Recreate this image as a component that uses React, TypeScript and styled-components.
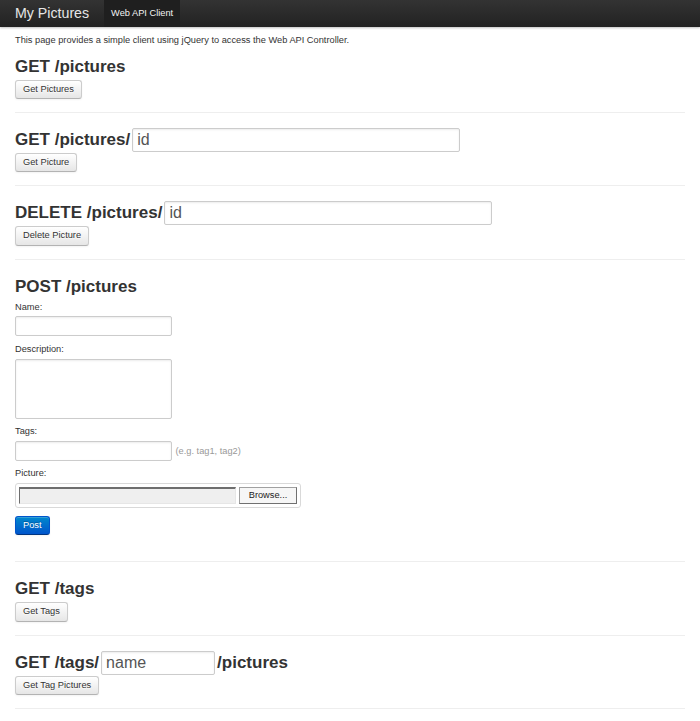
import React from "react";
import styled, { createGlobalStyle } from "styled-components";

const GlobalStyle = createGlobalStyle`
  html, body { margin: 0; padding: 0; background: #fff; }
  body {
    font-family: "Liberation Sans", Arial, Helvetica, sans-serif;
    font-size: 9.25px;
    line-height: 12.8px;
    color: #333;
  }
  * { box-sizing: border-box; }
`;

const Navbar = styled.div`
  height: 27px;
  background: linear-gradient(to bottom, #333333, #222222);
  box-shadow: 0 1px 2px rgba(0, 0, 0, 0.25);
  display: flex;
  align-items: stretch;
  padding-left: 15px;
`;

const Brand = styled.a`
  font-size: 14.2px;
  line-height: 26px;
  color: #e6e6e6;
  text-decoration: none;
  margin-right: 15px;
`;

const NavItem = styled.a<{ $active?: boolean }>`
  font-size: 9.25px;
  line-height: 27px;
  padding: 0 7px;
  color: #f2f2f2;
  text-decoration: none;
  background: ${(p) => (p.$active ? "#1f1f1f" : "transparent")};
`;

const Main = styled.div`
  padding: 0 15px;
`;

const Intro = styled.p`
  margin: 7.4px 0 0;
`;

const Section = styled.section<{ $first?: boolean }>`
  display: flex;
  flex-direction: column;
  align-items: flex-start;
  padding-top: ${(p) => (p.$first ? "7.5px" : "15px")};
  padding-bottom: 13px;
  border-bottom: 1px solid #eeeeee;
`;

const HeadRow = styled.div`
  display: flex;
  align-items: center;
  gap: 2px;
  height: 24px;
  margin-bottom: 1px;
`;

const Title = styled.h2`
  margin: 0;
  font-size: 17px;
  line-height: 24px;
  font-weight: bold;
  color: #333;
  white-space: nowrap;
`;

const ParamInput = styled.input<{ $w: number }>`
  width: ${(p) => p.$w}px;
  height: 24px;
  padding: 0 4px;
  border: 1px solid #cccccc;
  border-radius: 2px;
  box-shadow: inset 0 1px 2px rgba(0, 0, 0, 0.08);
  font-family: inherit;
  font-size: 16px;
  color: #555;
  background: #fff;
  outline: none;
  &::placeholder { color: #555; opacity: 1; }
`;

const Btn = styled.button<{ $primary?: boolean }>`
  display: block;
  width: max-content;
  font-family: inherit;
  font-size: 9.25px;
  line-height: 11.6px;
  padding: 2.85px 7px;
  border: 1px solid ${(p) => (p.$primary ? "#0055cc" : "#cccccc")};
  border-bottom-color: ${(p) => (p.$primary ? "#003580" : "#b3b3b3")};
  border-radius: 3px;
  color: ${(p) => (p.$primary ? "#fff" : "#333")};
  text-shadow: ${(p) =>
    p.$primary ? "0 -1px 0 rgba(0,0,0,0.25)" : "0 1px 1px rgba(255,255,255,0.75)"};
  background: ${(p) =>
    p.$primary
      ? "linear-gradient(to bottom, #0088cc, #0055cc)"
      : "linear-gradient(to bottom, #ffffff, #e6e6e6)"};
  box-shadow: inset 0 1px 0 rgba(255, 255, 255, 0.2), 0 1px 2px rgba(0, 0, 0, 0.05);
  cursor: pointer;
`;

const Form = styled.form`
  padding-top: 1px;
  margin-bottom: 13.5px;
`;

const FieldLabel = styled.label`
  display: block;
  margin-bottom: 3px;
  line-height: 12.8px;
`;

const FieldRow = styled.div`
  display: flex;
  align-items: center;
  margin-bottom: 6.4px;
`;

const TextInput = styled.input`
  width: 157px;
  height: 20px;
  border: 1px solid #cccccc;
  border-radius: 2px;
  box-shadow: inset 0 1px 2px rgba(0, 0, 0, 0.08);
  background: #fff;
  outline: none;
  font-family: inherit;
`;

const TextArea = styled.textarea`
  display: block;
  width: 157px;
  height: 60.4px;
  margin: 0 0 6.4px;
  border: 1px solid #cccccc;
  border-radius: 2px;
  box-shadow: inset 0 1px 2px rgba(0, 0, 0, 0.08);
  background: #fff;
  resize: none;
  outline: none;
`;

const Help = styled.span`
  color: #999;
  margin-left: 3.5px;
`;

const FileBox = styled.div`
  display: flex;
  gap: 3px;
  width: 286px;
  height: 25px;
  padding: 3px;
  border: 1px solid #d9d9d9;
  border-radius: 3px;
  background: #fff;
  margin-bottom: 7.4px;
`;

const FileField = styled.div`
  flex: 1;
  background: #efefef;
  border-top: 2px solid #6e6e6e;
  border-left: 1px solid #6e6e6e;
  border-right: 1px solid #e6e6e6;
  border-bottom: 1px solid #e6e6e6;
`;

const Browse = styled.div`
  width: 58px;
  display: flex;
  align-items: center;
  justify-content: center;
  background: #f6f6f6;
  border: 1px solid #a0a0a0;
  border-right-color: #707070;
  border-bottom-color: #707070;
  color: #222;
  font-size: 9.25px;
`;

export default function App() {
  return (
    <>
      <GlobalStyle />
      <Navbar>
        <Brand href="#">My Pictures</Brand>
        <NavItem href="#" $active>
          Web API Client
        </NavItem>
      </Navbar>
      <Main>
        <Intro>This page provides a simple client using jQuery to access the Web API Controller.</Intro>

        <Section $first>
          <HeadRow>
            <Title>GET /pictures</Title>
          </HeadRow>
          <Btn>Get Pictures</Btn>
        </Section>

        <Section>
          <HeadRow>
            <Title>GET /pictures/</Title>
            <ParamInput $w={328} placeholder="id" />
          </HeadRow>
          <Btn>Get Picture</Btn>
        </Section>

        <Section>
          <HeadRow>
            <Title>DELETE /pictures/</Title>
            <ParamInput $w={328} placeholder="id" />
          </HeadRow>
          <Btn>Delete Picture</Btn>
        </Section>

        <Section>
          <HeadRow>
            <Title>POST /pictures</Title>
          </HeadRow>
          <Form onSubmit={(e) => e.preventDefault()}>
            <FieldLabel>Name:</FieldLabel>
            <FieldRow>
              <TextInput />
            </FieldRow>
            <FieldLabel>Description:</FieldLabel>
            <TextArea />
            <FieldLabel>Tags:</FieldLabel>
            <FieldRow>
              <TextInput />
              <Help>(e.g. tag1, tag2)</Help>
            </FieldRow>
            <FieldLabel>Picture:</FieldLabel>
            <FileBox>
              <FileField />
              <Browse>Browse...</Browse>
            </FileBox>
            <Btn $primary>Post</Btn>
          </Form>
        </Section>

        <Section>
          <HeadRow>
            <Title>GET /tags</Title>
          </HeadRow>
          <Btn>Get Tags</Btn>
        </Section>

        <Section>
          <HeadRow>
            <Title>GET /tags/</Title>
            <ParamInput $w={114} placeholder="name" />
            <Title>/pictures</Title>
          </HeadRow>
          <Btn>Get Tag Pictures</Btn>
        </Section>
      </Main>
    </>
  );
}
